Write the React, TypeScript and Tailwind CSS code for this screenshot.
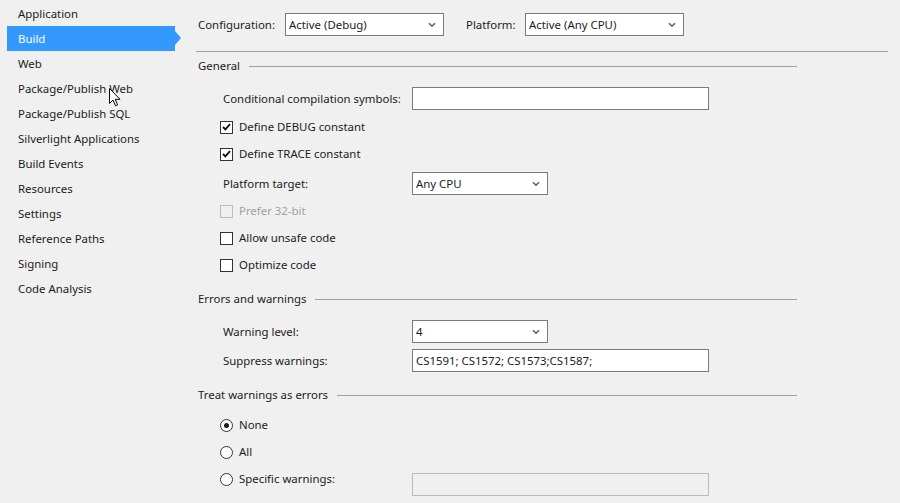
import React from "react";

const navItems = [
  "Application",
  "Build",
  "Web",
  "Package/Publish Web",
  "Package/Publish SQL",
  "Silverlight Applications",
  "Build Events",
  "Resources",
  "Settings",
  "Reference Paths",
  "Signing",
  "Code Analysis",
];

function Chevron() {
  return (
    <svg width="8" height="6" viewBox="0 0 8 6" className="shrink-0">
      <path d="M1 1.2 L4 4.2 L7 1.2" fill="none" stroke="#606060" strokeWidth="1.6" />
    </svg>
  );
}

function Select({ value, width }: { value: string; width: string }) {
  return (
    <div className={`${width} flex h-[23px] items-center justify-between border border-[#7a7a7a] bg-white pl-[3px] pr-[7px]`}>
      <span>{value}</span>
      <Chevron />
    </div>
  );
}

function TextBox({ value = "", disabled = false }: { value?: string; disabled?: boolean }) {
  return (
    <div
      className={
        disabled
          ? "flex h-[23px] w-[297px] items-center border border-[#bcbcbc] bg-[#f0f0f0] px-[3px]"
          : "flex h-[23px] w-[297px] items-center border border-[#7a7a7a] bg-white px-[3px]"
      }
    >
      {value}
    </div>
  );
}

function Check({ label, checked = false, disabled = false }: { label: string; checked?: boolean; disabled?: boolean }) {
  return (
    <div className="flex h-[16px] items-center pl-[24px]">
      <span
        className={
          disabled
            ? "flex h-[13px] w-[13px] items-center justify-center border border-[#bcbcbc] bg-[#f0f0f0]"
            : "flex h-[13px] w-[13px] items-center justify-center border border-[#333333] bg-white"
        }
      >
        {checked && (
          <svg width="9" height="8" viewBox="0 0 9 8">
            <path d="M1 4 L3.4 6.4 L8 1.2" fill="none" stroke="#111" strokeWidth="1.8" />
          </svg>
        )}
      </span>
      <span className={disabled ? "ml-[6px] text-[#a0a0a0]" : "ml-[6px]"}>{label}</span>
    </div>
  );
}

function Radio({ label, checked = false }: { label: string; checked?: boolean }) {
  return (
    <div className="flex h-[16px] items-center pl-[24px]">
      <span className="flex h-[13px] w-[13px] items-center justify-center rounded-full border border-[#333333] bg-white">
        {checked && <span className="h-[5px] w-[5px] rounded-full bg-[#1b1b1b]" />}
      </span>
      <span className="ml-[6px]">{label}</span>
    </div>
  );
}

function Heading({ title }: { title: string }) {
  return (
    <div className="flex h-[14px] items-center pl-[2px]">
      <span>{title}</span>
      <span className="ml-[9px] h-px flex-1 bg-[#a0a0a0]" />
    </div>
  );
}

export default function App() {
  return (
    <div
      className="relative flex h-[503px] w-[900px] overflow-hidden bg-[#f0f0f0] text-[11.4px] leading-none text-[#1b1b1b]"
      style={{ fontFamily: '"Segoe UI", "Noto Sans", sans-serif' }}
    >
      {/* nav */}
      <div className="w-[196px] shrink-0 pt-px">
        {navItems.map((item) =>
          item === "Build" ? (
            <div key={item} className="relative ml-[7px] flex h-[25px] w-[168px] items-center bg-[#3399ff] pl-[11px] text-white">
              {item}
              <span className="absolute left-full top-[5px] h-0 w-0 border-y-[7px] border-l-[6px] border-y-transparent border-l-[#3399ff]" />
            </div>
          ) : (
            <div key={item} className="ml-[7px] flex h-[25px] items-center pl-[11px]">
              {item}
            </div>
          )
        )}
      </div>

      {/* main */}
      <div className="flex-1">
        <div className="mt-[13px] flex h-[23px] items-center pl-[2px]">
          <span className="w-[87px]">Configuration:</span>
          <Select value="Active (Debug)" width="w-[159px]" />
          <span className="ml-[22px] w-[59px]">Platform:</span>
          <Select value="Active (Any CPU)" width="w-[159px]" />
        </div>
        <div className="mt-[15px] h-px w-[692px] bg-[#a0a0a0]" />

        <div className="w-[601px]">
          <div className="mt-[7px]">
            <Heading title="General" />
          </div>
          <div className="mt-[14px] flex items-center pl-[27px]">
            <span className="w-[189px]">Conditional compilation symbols:</span>
            <TextBox />
          </div>
          <div className="mt-[9px]">
            <Check label="Define DEBUG constant" checked />
          </div>
          <div className="mt-[11px]">
            <Check label="Define TRACE constant" checked />
          </div>
          <div className="mt-[10px] flex items-center pl-[27px]">
            <span className="w-[189px]">Platform target:</span>
            <Select value="Any CPU" width="w-[136px]" />
          </div>
          <div className="mt-[8px]">
            <Check label="Prefer 32-bit" disabled />
          </div>
          <div className="mt-[11px]">
            <Check label="Allow unsafe code" />
          </div>
          <div className="mt-[11px]">
            <Check label="Optimize code" />
          </div>

          <div className="mt-[19px]">
            <Heading title="Errors and warnings" />
          </div>
          <div className="mt-[14px] flex items-center pl-[27px]">
            <span className="w-[189px]">Warning level:</span>
            <Select value="4" width="w-[136px]" />
          </div>
          <div className="mt-[6px] flex items-center pl-[27px]">
            <span className="w-[189px]">Suppress warnings:</span>
            <TextBox value="CS1591; CS1572; CS1573;CS1587;" />
          </div>

          <div className="mt-[16px]">
            <Heading title="Treat warnings as errors" />
          </div>
          <div className="mt-[15px]">
            <Radio label="None" checked />
          </div>
          <div className="mt-[11px]">
            <Radio label="All" />
          </div>
          <div className="mt-[11px] flex items-start">
            <div className="w-[216px]">
              <Radio label="Specific warnings:" />
            </div>
            <div className="mt-[2px]">
              <TextBox disabled />
            </div>
          </div>
        </div>
      </div>

      {/* mouse cursor */}
      <svg className="absolute left-[109px] top-[88px]" width="12" height="19" viewBox="0 0 12 19">
        <path d="M0.5 0.5 L0.5 15.5 L4 12 L6.5 17.8 L8.6 16.9 L6.2 11.3 L11 11.3 Z" fill="#fff" stroke="#000" strokeWidth="1" strokeLinejoin="miter" />
      </svg>
    </div>
  );
}
